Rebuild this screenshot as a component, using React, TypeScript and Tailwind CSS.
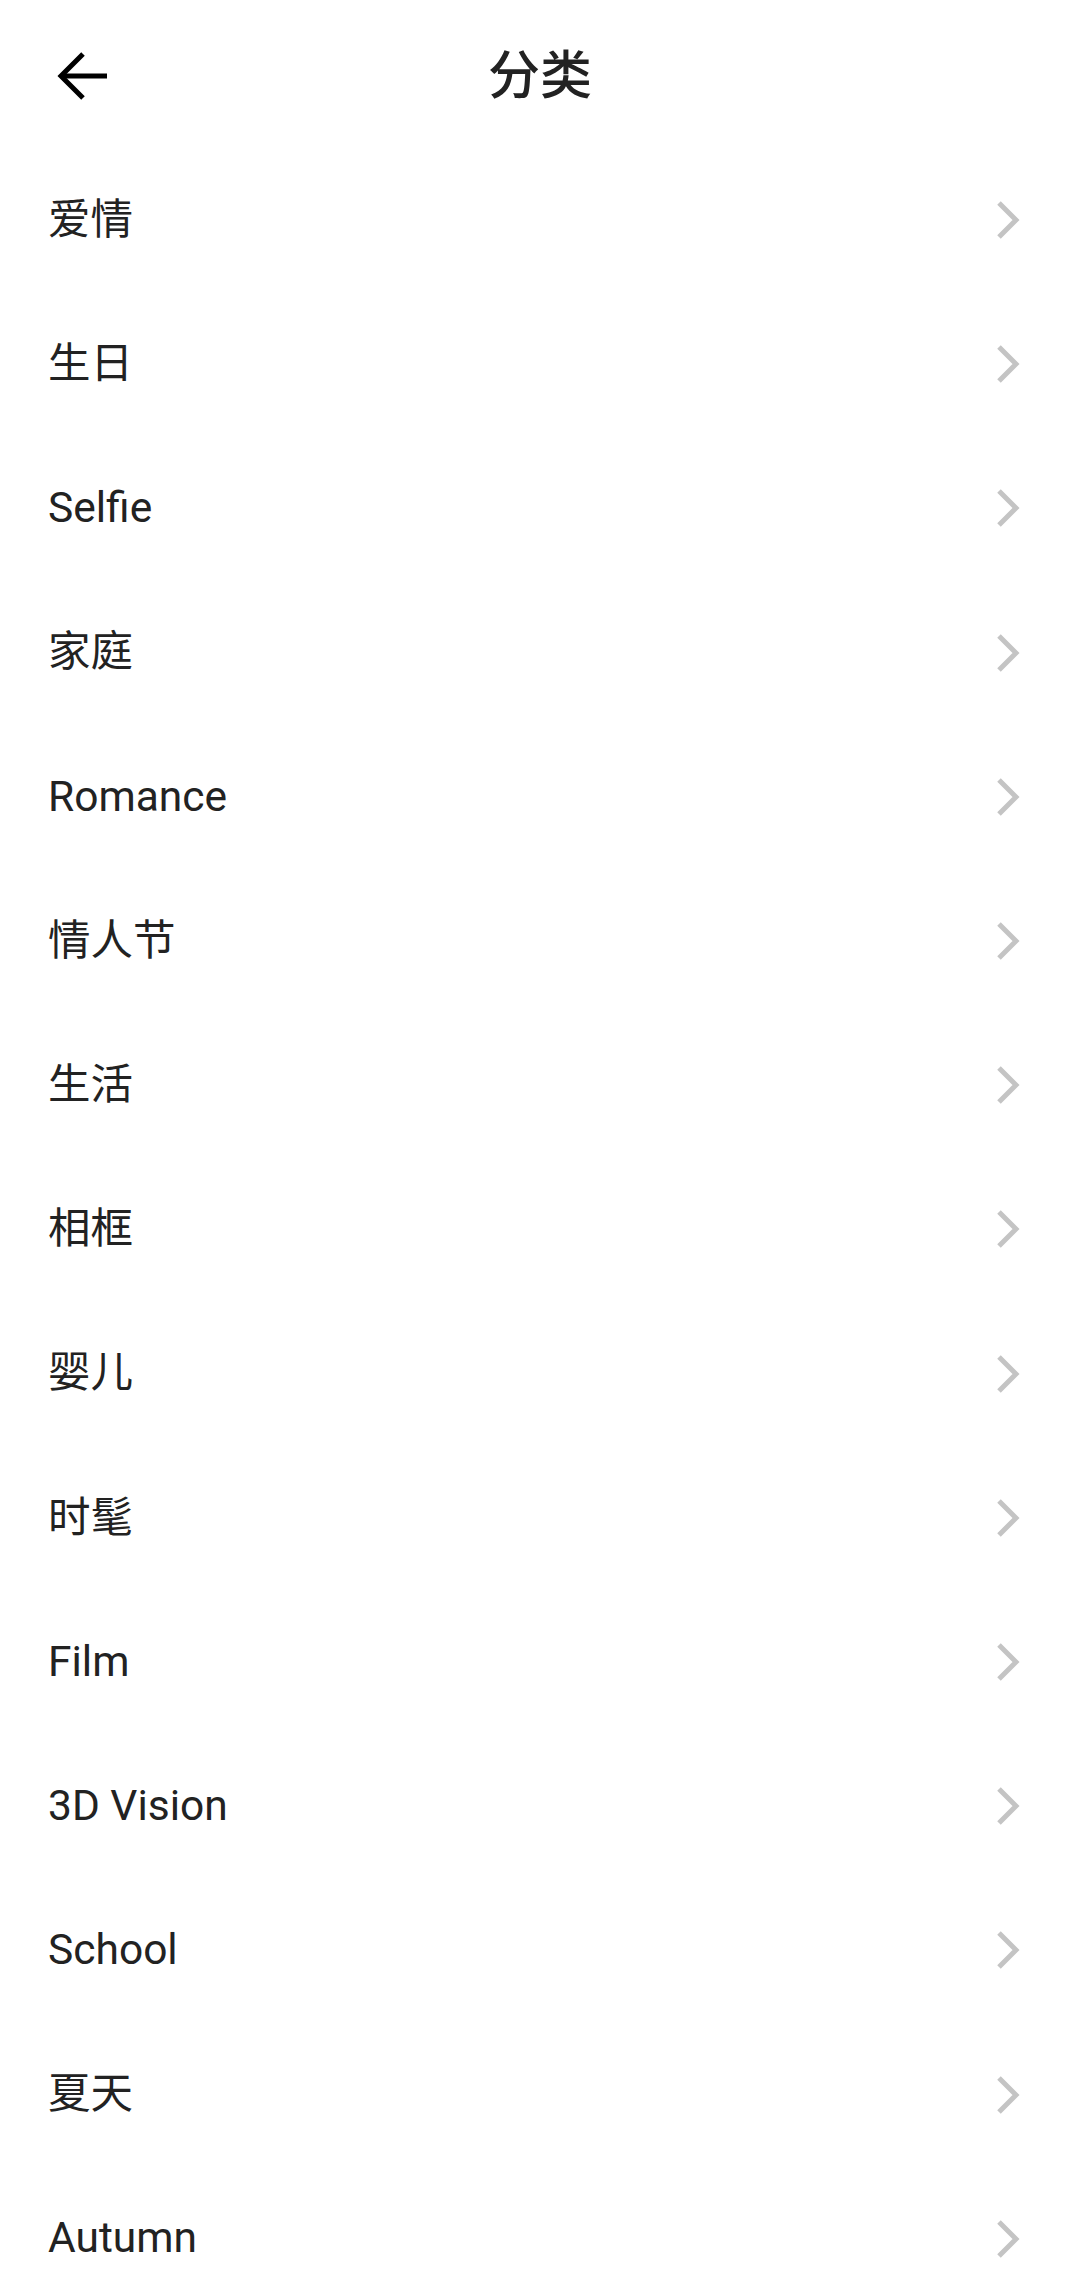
import React from 'react';

const CATEGORIES = [
  '爱情',
  '生日',
  'Selfie',
  '家庭',
  'Romance',
  '情人节',
  '生活',
  '相框',
  '婴儿',
  '时髦',
  'Film',
  '3D Vision',
  'School',
  '夏天',
  'Autumn',
];

const BackArrow: React.FC = () => (
  <svg width="52" height="50" viewBox="0 0 52 50" fill="none" stroke="#000" strokeWidth="5" strokeLinecap="butt" strokeLinejoin="miter">
    <path d="M50 25H5" />
    <path d="M26 3L4 25l22 22" />
  </svg>
);

const Chevron: React.FC = () => (
  <svg width="24" height="38" viewBox="0 0 24 38" fill="none" stroke="#c4c4c4" strokeWidth="5" strokeLinejoin="miter">
    <path d="M3 2l17 17L3 36" />
  </svg>
);

const App: React.FC = () => {
  return (
    <div
      className="w-[1080px] min-h-[2292px] bg-white overflow-hidden"
      style={{ fontFamily: 'Roboto, "Noto Sans CJK SC", sans-serif' }}
    >
      <header className="relative h-[148px] flex items-center justify-center pt-[5px]">
        <button className="absolute left-[57px] top-[51px]" aria-label="Back">
          <BackArrow />
        </button>
        <h1 className="text-[52px] font-medium text-[#222222] leading-none">分类</h1>
      </header>

      <ul>
        {CATEGORIES.map(name => (
          <li
            key={name}
            className="h-[144.2px] flex items-center justify-between pl-[48px] pr-[60px]"
          >
            <span className="text-[42.5px] text-[#222222] leading-none">{name}</span>
            <Chevron />
          </li>
        ))}
      </ul>
    </div>
  );
};

export default App;
